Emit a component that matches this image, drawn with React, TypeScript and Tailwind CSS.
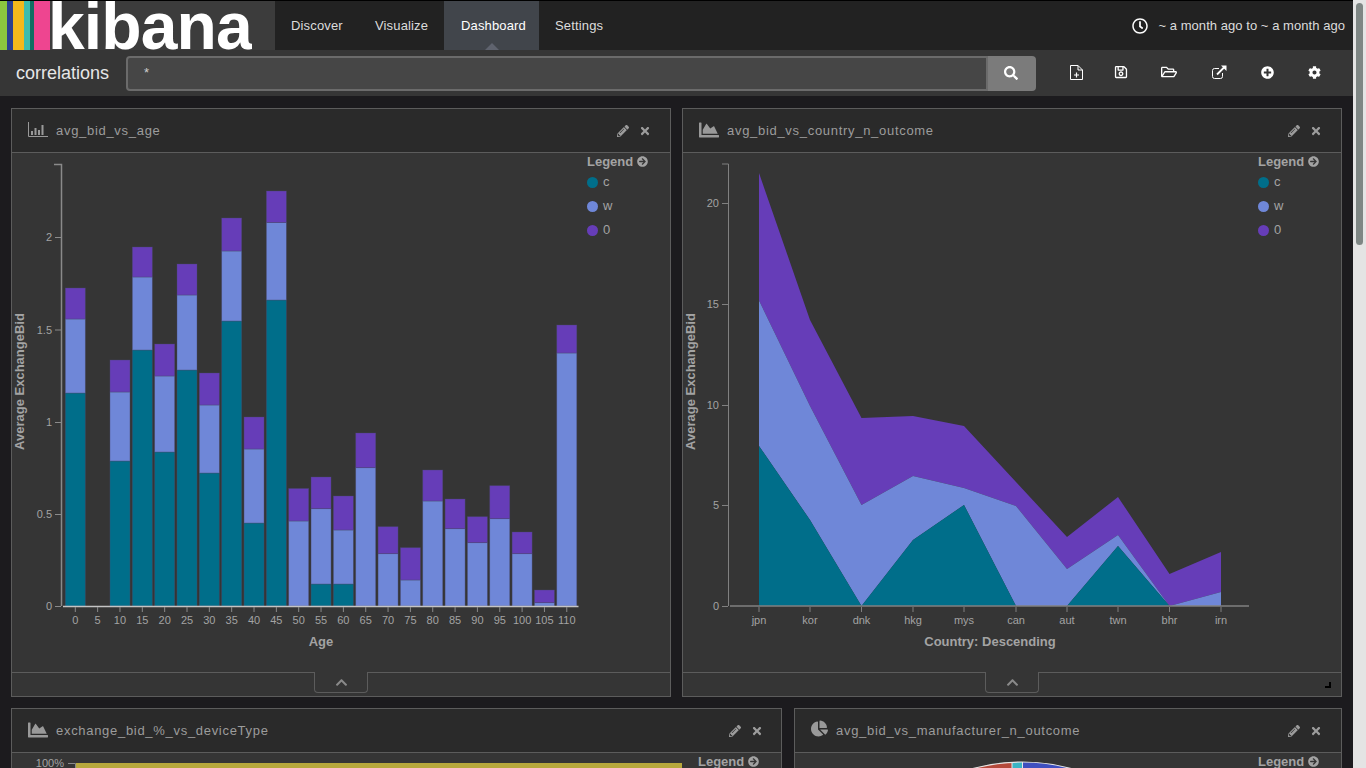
import React from "react";
import {
  FaRegClock, FaSearch, FaRegSave, FaRegFolderOpen, FaPlusCircle, FaCog,
  FaPencilAlt, FaTimes, FaArrowCircleRight, FaChevronUp, FaChartArea, FaChartPie,
} from "react-icons/fa";

const C = "#006E8A", W = "#6F87D8", Z = "#663DB8";

const bars: [number, number, number, number][] = [
  [0, 393, 319, 288], [5, 606, 606, 606], [10, 461, 392, 360], [15, 350, 277, 247], [20, 452, 376, 344],
  [25, 370, 295, 264], [30, 473, 405, 373], [35, 321, 251, 218], [40, 523, 449, 417], [45, 300, 222.5, 191],
  [50, 606, 521, 488.5], [55, 584, 508.7, 477], [60, 584, 530, 496], [65, 606, 467.7, 433], [70, 606, 553.7, 526.7],
  [75, 606, 580, 547.7], [80, 606, 501, 470], [85, 606, 528.7, 499], [90, 606, 542.7, 516.7], [95, 606, 518.7, 485.7],
  [100, 606, 553.7, 532], [105, 606, 602.7, 590], [110, 606, 353, 325],
];

const xs = [759, 810, 861.5, 913, 964, 1016, 1067, 1118, 1169.5, 1221];
const names = ["jpn", "kor", "dnk", "hkg", "mys", "can", "aut", "twn", "bhr", "irn"];
const cTop = [446, 520, 606, 540, 505, 606, 606, 546, 606, 606];
const wTop = [300.5, 406, 505, 476, 488, 506, 569, 535, 606, 592];
const zTop = [173, 320, 418, 416, 426, 482, 537, 497, 574, 552];

const poly = (upper: number[], lower: number[]) =>
  xs.map((x, i) => `${x},${upper[i]}`).join(" ") + " " +
  xs.map((x, i) => `${x},${lower[i]}`).reverse().join(" ");

const labelCls = "fill-[#a3a3a3] text-[11px]";
const axisTitleCls = "fill-[#a3a3a3] text-[13px] font-bold";

function BarChart() {
  const yt: [string, number][] = [["0", 606], ["0.5", 514], ["1", 422], ["1.5", 329.5], ["2", 237]];
  return (
    <svg viewBox="12 153 658 519" width={658} height={519} className="block">
      <text transform="translate(24 381.5) rotate(-90)" textAnchor="middle" className={axisTitleCls}>Average ExchangeBid</text>
      {bars.map(([age, c, w, z], i) => {
        const x = 65.3 + i * 22.34;
        return (
          <g key={age} stroke="#4a4a70" strokeOpacity={0.55} strokeWidth={0.7}>
            {c < 606 && <rect x={x} y={c} width={20} height={606 - c} fill={C} />}
            {w < c && <rect x={x} y={w} width={20} height={c - w} fill={W} />}
            {z < w && <rect x={x} y={z} width={20} height={w - z} fill={Z} />}
          </g>
        );
      })}
      <path d="M54 164.5H61.5V606" fill="none" stroke="#8a8a8a" strokeWidth={1.5} />
      <path d="M63 606.5H578.5" stroke="#c4c4c4" strokeWidth={1.5} />
      {yt.map(([l, y]) => (
        <g key={l}>
          <path d={`M55 ${y + 0.5}H61`} stroke="#8a8a8a" />
          <text x={52} y={y + 4} textAnchor="end" className={labelCls}>{l}</text>
        </g>
      ))}
      {bars.map(([age], i) => {
        const x = 75.3 + i * 22.34;
        return (
          <g key={age}>
            <path d={`M${x} 607V612`} stroke="#8a8a8a" />
            <text x={x} y={624} textAnchor="middle" className={labelCls}>{age}</text>
          </g>
        );
      })}
      <text x={321} y={646} textAnchor="middle" className={axisTitleCls}>Age</text>
    </svg>
  );
}

function AreaChart() {
  const zero = xs.map(() => 606);
  const yt: [string, number][] = [["0", 606], ["5", 505], ["10", 405], ["15", 304], ["20", 203]];
  return (
    <svg viewBox="683 153 658 519" width={658} height={519} className="block">
      <text transform="translate(695 381.5) rotate(-90)" textAnchor="middle" className={axisTitleCls}>Average ExchangeBid</text>
      <polygon points={poly(zTop, wTop)} fill={Z} />
      <polygon points={poly(wTop, cTop)} fill={W} />
      <polygon points={poly(cTop, zero)} fill={C} />
      <path d="M722 164H728.5V606" fill="none" stroke="#808080" />
      <path d="M730 606H1249" stroke="#808080" strokeWidth={1.5} />
      {yt.map(([l, y]) => (
        <g key={l}>
          <path d={`M722 ${y + 0.5}H728`} stroke="#808080" />
          <text x={719} y={y + 4} textAnchor="end" className={labelCls}>{l}</text>
        </g>
      ))}
      {xs.map((x, i) => (
        <g key={x}>
          <path d={`M${x} 607V612`} stroke="#808080" />
          <text x={x} y={624} textAnchor="middle" className={labelCls}>{names[i]}</text>
        </g>
      ))}
      <text x={990} y={646} textAnchor="middle" className={axisTitleCls}>Country: Descending</text>
    </svg>
  );
}

function BarIcon() {
  return (
    <svg viewBox="0 0 20 15" width={20} height={15} className="text-[#999] -translate-y-[1px]">
      <path d="M0.5 0V14.5H20" fill="none" stroke="currentColor" />
      <path d="M3 9h2v4H3zM6.5 6h2v7h-2zM10 8h2v5h-2zM13.5 3h2v10h-2z" fill="currentColor" />
    </svg>
  );
}

function AreaIcon() {
  return <FaChartArea size={20} className="text-[#999] -translate-y-[1px]" />;
}

function Legend({ items }: { items: boolean }) {
  return (
    <div className="absolute top-0 right-[22px] w-[61px] text-[#a3a3a3]">
      <div className="flex items-center justify-between h-[17px] text-[13px] font-bold">
        <span>Legend</span>
        <FaArrowCircleRight size={11} />
      </div>
      {items && (
        <div className="flex flex-col">
          {[[C, "c"], [W, "w"], [Z, "0"]].map(([col, l]) => (
            <div key={l} className="flex items-center h-[24px] gap-[5px] text-[13px]">
              <span className="w-[11px] h-[11px] rounded-full" style={{ backgroundColor: col }} />
              <span>{l}</span>
            </div>
          ))}
        </div>
      )}
    </div>
  );
}

function PanelHeader({ icon, title, iconW = "w-[28px]", right = "pr-[19px]" }: { icon: React.ReactNode; title: string; iconW?: string; right?: string }) {
  return (
    <div className={`h-[44px] shrink-0 flex items-center pl-[16px] bg-[#2a2a2a] border-b border-[#5c5c5c] ${right}`}>
      <span className={`flex items-center ${iconW}`}>{icon}</span>
      <span className="text-[13px] tracking-[0.7px] text-[#9c9c9c]">{title}</span>
      <span className="ml-auto flex items-center gap-[10px] text-[#9c9c9c]">
        <FaPencilAlt size={12} />
        <FaTimes size={12} />
      </span>
    </div>
  );
}

function Collapse() {
  return (
    <div className="h-[24px] shrink-0 border-t border-[#5c5c5c] flex justify-center">
      <div className="-mt-px w-[54px] h-[21px] bg-[#353535] border-x border-b border-[#5c5c5c] rounded-b-[4px] flex items-center justify-center text-[#8a8a8a]">
        <FaChevronUp size={13} />
      </div>
    </div>
  );
}

function FileIcon() {
  return (
    <svg viewBox="0 0 13 15" width={13} height={15} fill="none" stroke="white">
      <path d="M0.5 0.5H8L12.5 5V14.5H0.5Z" />
      <path d="M8 0.5V5H12.5" />
      <path d="M6.5 7.5V12.5M4 10H9" strokeWidth={1.2} />
    </svg>
  );
}

function ExternalIcon() {
  return (
    <svg viewBox="0 0 15 14" width={15} height={14} fill="none" stroke="white">
      <path d="M10.5 8V11.5Q10.5 13.5 8.5 13.5H2.5Q0.5 13.5 0.5 11.5V5.5Q0.5 3.5 2.5 3.5H7" />
      <path d="M5 9.5L12 2.5" strokeWidth={1.8} />
      <path d="M9 0.5H14.5V6Z" fill="white" stroke="none" />
    </svg>
  );
}

function ToolbarIcon({ children, w }: { children: React.ReactNode; w: string }) {
  return <span className={`flex items-center justify-center text-white ${w}`}>{children}</span>;
}

export default function App() {
  return (
    <div className="flex h-[768px] overflow-hidden bg-[#1c1b1e] font-['Liberation_Sans',Arial,sans-serif]">
      <div className="w-[1353px] shrink-0 flex flex-col">
        <nav className="h-[50px] shrink-0 border-t border-black bg-[#222222] flex items-stretch text-[13px] tracking-[0.15px] text-[#dcdcdc]">
          <div className="w-[275px] shrink-0 bg-[#3c3c3c] flex overflow-hidden">
            <span className="w-[7px] bg-[#8cc63f]" />
            <span className="w-[6px] bg-[#2b3f8f]" />
            <span className="w-[11px] bg-[#f4b81c]" />
            <span className="w-[6px] bg-[#3cbcae]" />
            <span className="w-[4px] bg-[#0e6e62]" />
            <span className="w-[16px] bg-[#ee4590]" />
            <span className="-ml-[2px] h-[49px] overflow-hidden flex items-end text-[66px] leading-[49px] font-bold text-white tracking-[-0.9px]">
              <span className="relative top-[1px]">kibana</span>
            </span>
          </div>
          <span className="w-[84px] pl-[16px] flex items-center">Discover</span>
          <span className="w-[85px] pl-[16px] flex items-center">Visualize</span>
          <span className="relative w-[95px] pl-[17px] bg-[#41454b] flex items-center text-white">
            Dashboard
            <span className="absolute bottom-0 left-[41px] w-0 h-0 border-x-[7px] border-x-transparent border-b-[7px] border-b-[#5f636e]" />
          </span>
          <span className="pl-[16px] flex items-center">Settings</span>
          <span className="ml-auto pr-[8px] flex items-center gap-[10px]">
            <FaRegClock size={16} className="text-white" />
            <span className="tracking-[0.05px]">~ a month ago to ~ a month ago</span>
          </span>
        </nav>

        <div className="h-[46px] shrink-0 bg-[#363636] flex items-center">
          <span className="w-[126px] shrink-0 pl-[16px] text-[18px] text-[#e6e6e6]">correlations</span>
          <div className="w-[910px] h-[35px] flex">
            <div className="flex-1 bg-[#464646] border-2 border-[#6b6b6b] rounded-l-[4px] pl-[16px] flex items-center text-[13px] text-[#cfcfcf]">*</div>
            <div className="w-[48px] bg-[#7b7b7b] rounded-r-[4px] flex items-center justify-center text-white">
              <FaSearch size={14} className="-translate-x-[1px]" />
            </div>
          </div>
          <div className="ml-[16px] mb-[2px] flex items-center h-[40px]">
            <ToolbarIcon w="w-[48px]"><FileIcon /></ToolbarIcon>
            <ToolbarIcon w="w-[42px]"><FaRegSave size={14} /></ToolbarIcon>
            <ToolbarIcon w="w-[54px]"><FaRegFolderOpen size={16} /></ToolbarIcon>
            <ToolbarIcon w="w-[46px]"><ExternalIcon /></ToolbarIcon>
            <ToolbarIcon w="w-[50px]"><FaPlusCircle size={13} /></ToolbarIcon>
            <ToolbarIcon w="w-[44px]"><FaCog size={13} /></ToolbarIcon>
          </div>
        </div>

        <div className="pt-[12px] pl-[11px] flex flex-col gap-[11px]">
          <div className="flex gap-[11px]">
            <section className="w-[660px] h-[589px] border border-[#5c5c5c] bg-[#353535] flex flex-col">
              <PanelHeader icon={<BarIcon />} title="avg_bid_vs_age" />
              <div className="relative h-[519px] shrink-0">
                <BarChart />
                <Legend items />
              </div>
              <Collapse />
            </section>
            <section className="relative w-[660px] h-[589px] border border-[#5c5c5c] bg-[#353535] flex flex-col">
              <PanelHeader icon={<AreaIcon />} title="avg_bid_vs_country_n_outcome" />
              <div className="relative h-[519px] shrink-0">
                <AreaChart />
                <Legend items />
              </div>
              <Collapse />
              <span className="absolute right-[10px] bottom-[8px] w-[6px] h-[6px] border-r-2 border-b-2 border-black" />
            </section>
          </div>
          <div className="flex gap-[12px]">
            <section className="w-[771px] h-[200px] border border-[#5c5c5c] bg-[#353535] flex flex-col">
              <PanelHeader icon={<AreaIcon />} title="exchange_bid_%_vs_deviceType" right="pr-[18px]" />
              <div className="relative">
                <svg viewBox="12 753 769 15" width={769} height={15} className="block">
                  <text x={64} y={767} textAnchor="end" className={labelCls}>100%</text>
                  <path d="M68 763.5H75.5V768" fill="none" stroke="#8a8a8a" />
                  <rect x={76} y={763} width={606} height={5} fill="#B7A83C" />
                </svg>
                <Legend items={false} />
              </div>
            </section>
            <section className="w-[548px] h-[200px] border border-[#5c5c5c] bg-[#353535] flex flex-col">
              <PanelHeader icon={<FaChartPie size={17} className="text-[#999] -translate-y-[2px]" />} title="avg_bid_vs_manufacturer_n_outcome" iconW="w-[25px]" />
              <div className="relative">
                <svg viewBox="795 753 546 15" width={546} height={15} className="block">
                  <defs>
                    <clipPath id="pie">
                      <circle cx={1022} cy={949} r={187} />
                    </clipPath>
                  </defs>
                  <g clipPath="url(#pie)">
                    <rect x={1022} y={755} width={80} height={13} fill="#3F4FBF" />
                    <rect x={940} y={755} width={72} height={13} fill="#B5493B" />
                    <rect x={1012} y={755} width={10} height={13} fill="#3AB4C4" />
                    <path d="M1012 768V755M1022.5 768V755" stroke="#e6e6e6" />
                  </g>
                  <circle cx={1022} cy={949} r={187} fill="none" stroke="#e6e6e6" strokeWidth={1.2} />
                </svg>
                <Legend items={false} />
              </div>
            </section>
          </div>
        </div>
      </div>
      <aside className="w-[13px] shrink-0 bg-[#e4e4e4] pt-[3px] flex justify-center">
        <span className="w-[7px] h-[242px] rounded-full bg-[#7e8684]" />
      </aside>
    </div>
  );
}
